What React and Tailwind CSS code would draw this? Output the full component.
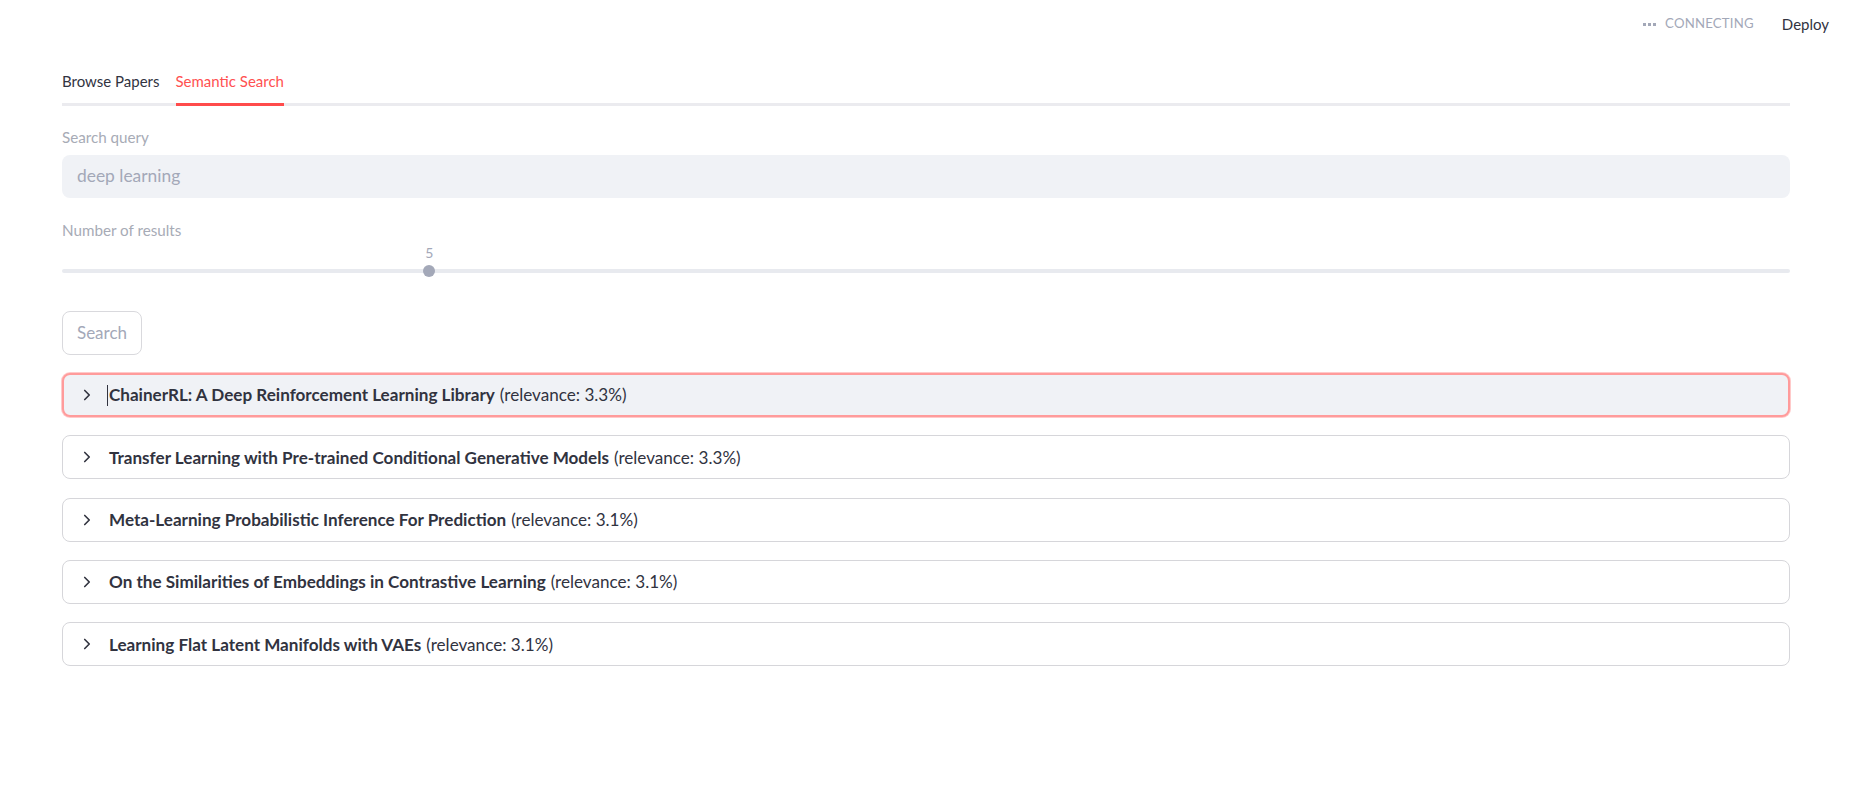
import { ChevronRight } from "lucide-react";

const results = [
  { title: "ChainerRL: A Deep Reinforcement Learning Library", score: "3.3%" },
  { title: "Transfer Learning with Pre-trained Conditional Generative Models", score: "3.3%" },
  { title: "Meta-Learning Probabilistic Inference For Prediction", score: "3.1%" },
  { title: "On the Similarities of Embeddings in Contrastive Learning", score: "3.1%" },
  { title: "Learning Flat Latent Manifolds with VAEs", score: "3.1%" },
];

const Expander = ({ title, score, focused }) => (
  <div
    className={
      focused
        ? "h-[44px] rounded-lg border-2 border-[#ff9b9b] bg-[#f0f2f6] shadow-[0_0_0_1px_#ffcaca] flex items-center pl-[14px]"
        : "h-[44px] rounded-lg border border-[#d6d6da] bg-white flex items-center pl-[15px]"
    }
  >
    <ChevronRight className="w-[18px] h-[18px] text-[#31333f]" strokeWidth={2.2} />
    <div className="ml-[13px] flex items-center text-[17.1px] text-[#31333f] leading-none">
      {focused && <span className="w-px h-[21px] bg-[#31333f] -ml-[2px] mr-[1px]" />}
      <span className="font-bold">{title}</span>
      <span className="ml-[5px]">(relevance: {score})</span>
    </div>
  </div>
);

export default function App() {
  return (
    <div className="min-h-screen bg-white font-[family-name:Lato,sans-serif] text-[#31333f]">
      {/* Header */}
      <div className="h-[59px] flex items-start justify-end pt-[13px] pr-[23px]">
        <div className="flex items-center h-[22px]">
          <span className="flex gap-[2px] mr-[9px]">
            <span className="w-[3px] h-[3px] bg-[#a3a8b8]" />
            <span className="w-[3px] h-[3px] bg-[#a3a8b8]" />
            <span className="w-[3px] h-[3px] bg-[#a3a8b8]" />
          </span>
          <span className="text-[#a3a8b8] text-[13.2px] tracking-[0.2px]">CONNECTING</span>
          <span className="ml-[28px] text-[15px] text-[#31333f]">Deploy</span>
        </div>
      </div>

      <div className="px-[62px]">
        {/* Tabs */}
        <div className="h-[47px] flex items-stretch gap-[16px] border-b-[3px] border-[#ebebef]">
          <div className="flex items-center text-[15px] text-[#31333f]">Browse Papers</div>
          <div className="flex items-center text-[15px] text-[#ff5151] border-b-[3px] border-[#ff4b4b] -mb-[3px]">
            Semantic Search
          </div>
        </div>

        {/* Search query */}
        <div className="mt-[20px] h-[22px] flex items-center text-[15.2px] text-[#a7abb6]">Search query</div>
        <div className="mt-[7px] h-[43px] rounded-lg bg-[#f0f2f6] flex items-center px-[15px] text-[17.4px] text-[#a3a8b8]">
          deep learning
        </div>

        {/* Slider */}
        <div className="mt-[21px] h-[22px] flex items-center text-[15.2px] text-[#a7abb6]">Number of results</div>
        <div className="relative h-[40px]">
          <div className="absolute left-0 right-0 top-[28px] h-[4px] rounded-full bg-[#e8eaef]" />
          <div className="absolute left-[21.25%] top-[24px] w-[12px] h-[12px] -ml-[6px] rounded-full bg-[#a3a8b8]" />
          <div className="absolute left-[21.25%] top-[3px] -translate-x-1/2 text-[14px] leading-[18px] text-[#a3a8b8]">
            5
          </div>
        </div>

        {/* Button */}
        <button className="mt-[30px] h-[44px] w-[80px] rounded-lg border border-[#d9d9dd] bg-white text-[17px] text-[#a3a8b8] flex items-center justify-center">
          Search
        </button>

        {/* Results */}
        <div className="mt-[18px] flex flex-col gap-[18.3px]">
          {results.map((r, i) => (
            <Expander key={r.title} title={r.title} score={r.score} focused={i === 0} />
          ))}
        </div>
      </div>
    </div>
  );
}
